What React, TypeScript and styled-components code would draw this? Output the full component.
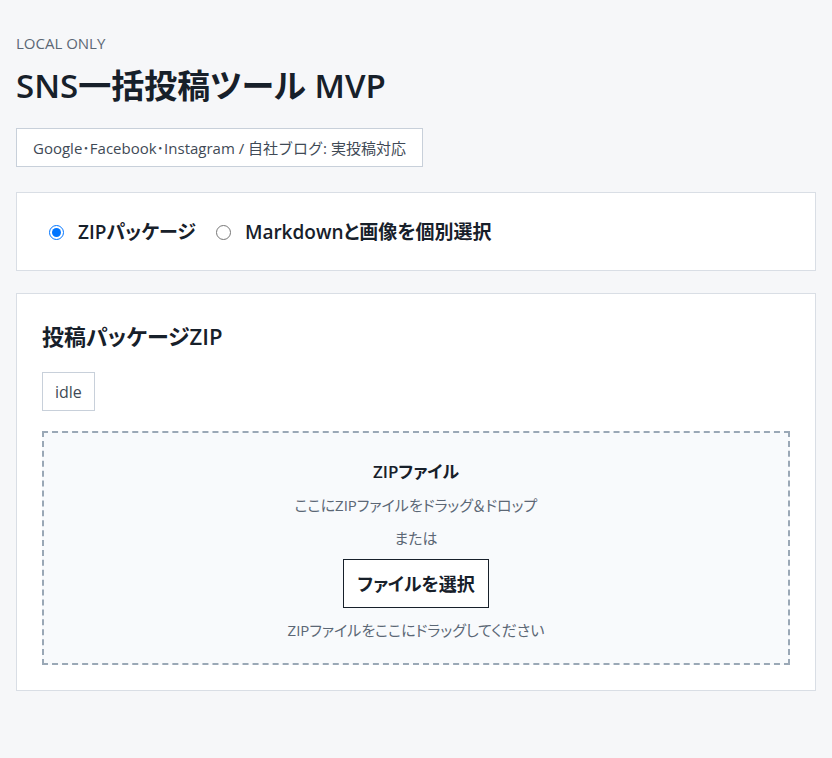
import React, { useState } from "react";
import styled, { createGlobalStyle } from "styled-components";

const GlobalStyle = createGlobalStyle`
  *, *::before, *::after { box-sizing: border-box; }
  body {
    margin: 0;
    background: #f6f7f9;
    color: #17202a;
    font-family: "Open Sans", "Noto Sans CJK JP", sans-serif;
    font-feature-settings: "palt";
    font-size: 16px;
    line-height: 24px;
  }
`;

const Page = styled.main`
  max-width: 1120px;
  margin: 0 auto;
  padding: 32px 16px 64px;
  display: flex;
  flex-direction: column;
  gap: 22px;
`;

const Header = styled.header`
  display: flex;
  flex-direction: column;
  align-items: flex-start;
  padding-bottom: 3px;
`;

const Eyebrow = styled.p`
  margin: 0;
  color: #5b6775;
  font-size: 15px;
  line-height: 22px;
`;

const Title = styled.h1`
  margin: 8px 0 18px;
  font-size: 33px;
  line-height: 48px;
  font-weight: 600;
`;

const Badge = styled.div`
  padding: 8px 12px 6px;
  border: 1px solid #c8d0da;
  background: #fff;
  color: #3f4a56;
  font-size: 16px;
  line-height: 23px;
`;

const HeaderBadge = styled(Badge)`
  padding: 8px 16px 6px;
  font-size: 15px;
  font-feature-settings: normal;
`;

const Panel = styled.section`
  padding: 24px 25px 25px;
  border: 1px solid #d9dee5;
  background: #fff;
  display: flex;
  flex-direction: column;
  align-items: flex-start;
`;

const ModePanel = styled.fieldset`
  margin: 0;
  padding: 25px 32px 23px;
  border: 1px solid #d9dee5;
  background: #fff;
  display: flex;
  flex-wrap: wrap;
  gap: 20px;
`;

const Mode = styled.label`
  display: flex;
  align-items: center;
  gap: 14px;
  font-size: 19px;
  line-height: 29px;
  font-weight: 600;
`;

const Radio = styled.input`
  width: 15px;
  height: 15px;
  margin: 0;
`;

const Heading = styled.h2`
  margin: 0 0 18px;
  font-size: 22px;
  line-height: 36px;
  font-weight: 600;
`;

const DropZone = styled.div`
  align-self: stretch;
  margin-top: 20px;
  padding: 25px 22px 20px;
  border: 2px dashed #9aa8b6;
  background: #f8fafc;
  display: flex;
  flex-direction: column;
  align-items: center;
  gap: 8px;
  text-align: center;
`;

const DropTitle = styled.strong`
  font-size: 17px;
  line-height: 27px;
  font-weight: 600;
`;

const Hint = styled.span`
  color: #5b6775;
  font-size: 15px;
  line-height: 25px;
`;

const PickButton = styled.button`
  margin-bottom: 2px;
  padding: 11px 13px 9px;
  border: 1px solid #17202a;
  background: #fff;
  color: #17202a;
  font: inherit;
  font-feature-settings: inherit;
  font-size: 18px;
  line-height: 27px;
  font-weight: 600;
`;

const modes = [
  { id: "zip", label: "ZIPパッケージ" },
  { id: "files", label: "Markdownと画像を個別選択" },
];

export default function App() {
  const [mode, setMode] = useState("zip");
  return (
    <>
      <GlobalStyle />
      <Page>
        <Header>
          <Eyebrow>LOCAL ONLY</Eyebrow>
          <Title>SNS一括投稿ツール MVP</Title>
          <HeaderBadge>Google･Facebook･Instagram / 自社ブログ: 実投稿対応</HeaderBadge>
        </Header>
        <ModePanel>
          {modes.map(({ id, label }) => (
            <Mode key={id}>
              <Radio type="radio" name="mode" value={id} checked={mode === id} onChange={() => setMode(id)} />
              <span>{label}</span>
            </Mode>
          ))}
        </ModePanel>
        <Panel>
          <Heading>投稿パッケージZIP</Heading>
          <Badge>idle</Badge>
          <DropZone>
            <DropTitle>ZIPファイル</DropTitle>
            <Hint>ここにZIPファイルをドラッグ＆ドロップ</Hint>
            <Hint>または</Hint>
            <PickButton type="button">ファイルを選択</PickButton>
            <Hint>ZIPファイルをここにドラッグしてください</Hint>
          </DropZone>
        </Panel>
      </Page>
    </>
  );
}
